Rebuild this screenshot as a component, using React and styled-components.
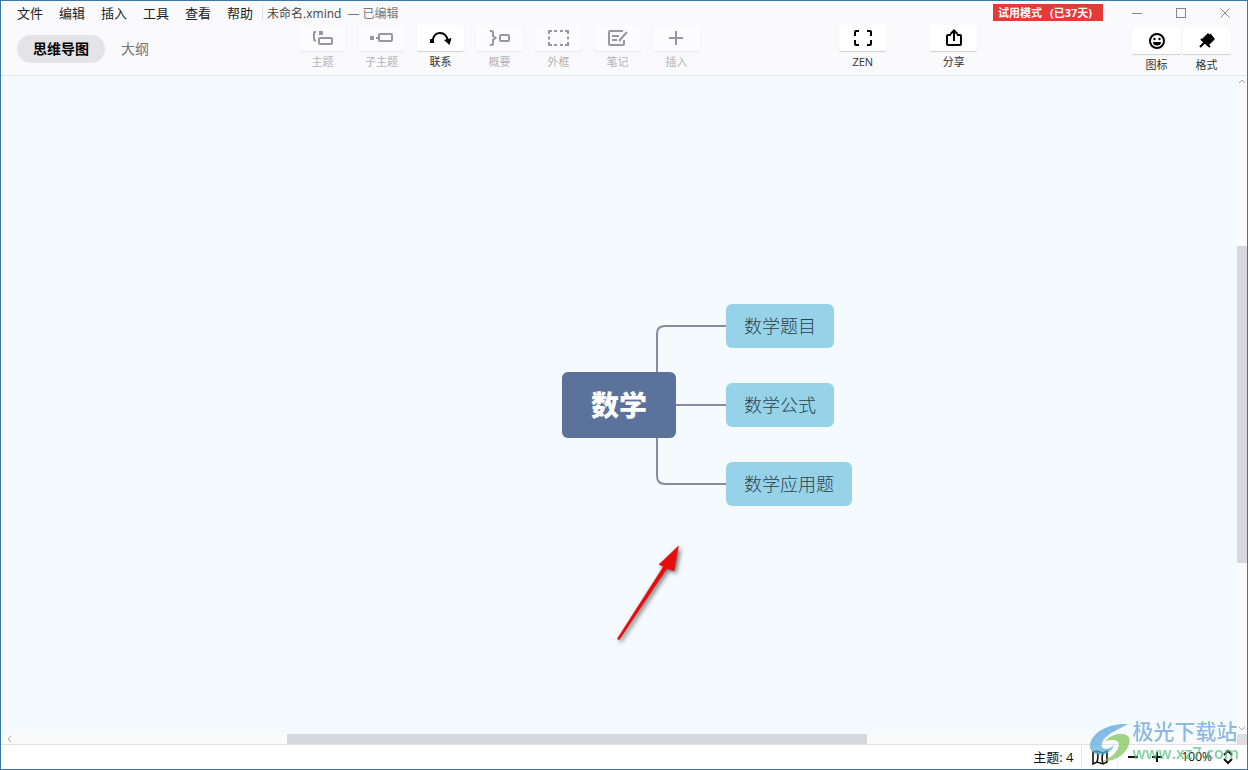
import styled, { createGlobalStyle, css } from 'styled-components';

const GlobalStyle = createGlobalStyle`
  * {
    box-sizing: border-box;
  }

  body {
    margin: 0;
    font-family: "Open Sans", "Noto Sans CJK SC", sans-serif;
    font-size: 13px;
    color: #222;
  }

  button {
    padding: 0;
    border: none;
    background: none;
    font: inherit;
    color: inherit;
  }

  svg {
    display: block;
  }
`;

const Window = styled.div`
  position: relative;
  display: flex;
  flex-direction: column;
  min-height: 100vh;
  border: 1px solid #3a78ab;
  background: #fafafc;
  overflow: hidden;
`;

const TitleBar = styled.header`
  display: flex;
  align-items: center;
  height: 23px;
  padding-left: 16px;
`;

const Menu = styled.nav`
  display: flex;
  gap: 16px;
  padding-right: 9px;
  border-right: 1px solid #e2e2e6;
  line-height: 16px;
`;

const FileName = styled.span`
  margin-left: 4px;
  font-size: 12px;
  color: #444;
`;

const FileState = styled.span`
  margin-left: 6px;
  font-size: 12px;
  color: #777;
`;

const TrialBadge = styled.button`
  display: flex;
  gap: 8px;
  height: 17px;
  margin-left: auto;
  padding: 0 11px 0 5px;
  background: #e53a37;
  color: #fff;
  font-size: 11px;
  font-weight: 700;
  line-height: 17px;
`;

const WindowButtons = styled.div`
  display: flex;
  margin-left: 12px;
`;

const WindowButton = styled.button`
  display: flex;
  justify-content: center;
  align-items: center;
  width: 44px;
  height: 22px;
  color: #84868e;
`;

const Toolbar = styled.div`
  display: flex;
  height: 52px;
  padding: 1px 16px 0 0;
  border-bottom: 1px solid #dfe7ef;
`;

const Tabs = styled.div`
  display: flex;
  align-items: flex-start;
  flex: 0 0 298px;
  padding: 10px 0 0 16px;
`;

const Tab = styled.button`
  height: 28px;
  padding: 0 16px 2px;
  border-radius: 14px;
  font-size: 14px;
  color: #777;
  ${({ $active }) =>
    $active &&
    css`
      background: #e4e4e6;
      color: #000;
      font-weight: 700;
    `}
`;

const Tools = styled.div`
  display: flex;
  gap: ${({ $gap }) => $gap}px;
`;

const Spacer = styled.div`
  flex: ${({ $grow }) => $grow};
`;

const ToolButton = styled.button`
  display: flex;
  flex-direction: column;
  align-items: center;
  gap: 3px;
  width: 47px;
  height: 46px;
  font-size: 11px;
  line-height: 16px;
  color: ${({ disabled }) => (disabled ? '#b4b4b8' : '#333')};
`;

const ToolIcon = styled.span`
  display: flex;
  justify-content: center;
  align-items: center;
  width: 100%;
  height: 26px;
  border-radius: 2px;
  background: ${({ $dim }) => ($dim ? '#fcfcfe' : '#fff')};
  color: ${({ $dim }) => ($dim ? '#98989c' : '#000')};
  box-shadow: 0 1px 1px ${({ $dim }) => ($dim ? '#e9e9ec' : '#cfcfd3')};
`;

const PanelTools = styled(Tools)`
  padding-top: 3px;

  ${ToolButton} {
    width: 49px;
  }
`;

const Workspace = styled.main`
  display: grid;
  flex: 1;
  grid-template-columns: 1fr 10px;
  grid-template-rows: 1fr 11px;
  min-height: 560px;
`;

const Canvas = styled.section`
  position: relative;
  background: #f4fafe;
  overflow: hidden;
`;

const MindMap = styled.div`
  position: absolute;
  top: 50%;
  left: 50%;
`;

const Topic = styled.div`
  position: absolute;
  top: ${({ $y }) => $y}px;
  left: 107px;
  height: 44px;
  padding: 0 18px;
  border-radius: 6px;
  background: #97d3e8;
  color: #2c3e4c;
  font-size: 18px;
  font-weight: 300;
  line-height: 44px;
  white-space: nowrap;
`;

const CentralTopic = styled.h1`
  position: absolute;
  top: -33px;
  left: -57px;
  width: 114px;
  height: 66px;
  margin: 0;
  border-radius: 6px;
  background: #5b739b;
  color: #fff;
  font-size: 28px;
  font-weight: 900;
  line-height: 66px;
  text-align: center;
`;

const Branches = styled.svg`
  position: absolute;
  top: -90px;
  left: 0;
`;

const PointerArrow = styled.svg`
  position: absolute;
  top: 135px;
  left: -10px;
`;

const VerticalScroll = styled.div`
  display: flex;
  flex-direction: column;
  align-items: center;
  background: #f9fafc;
`;

const HorizontalScroll = styled.div`
  display: flex;
  align-items: center;
  border-bottom: 1px solid #e2e2e4;
  background: #fafafb;
`;

const ScrollArrow = styled.button`
  display: flex;
  justify-content: center;
  align-items: center;
  flex: none;
  width: ${({ $wide }) => ($wide ? 16 : 10)}px;
  height: 10px;
  color: #a5a8b2;
`;

const ScrollTrack = styled.div`
  display: flex;
  flex: 1;
  align-self: stretch;
  flex-direction: ${({ $vertical }) => ($vertical ? 'column' : 'row')};
`;

const Thumb = styled.div`
  flex: ${({ $size }) => $size};
  background: #d7d8dd;
`;

const ScrollCorner = styled.div`
  background: #dddee2;
`;

const StatusBar = styled.footer`
  display: flex;
  justify-content: flex-end;
  align-items: stretch;
  height: 24px;
  padding-right: 13px;
  background: #fff;
  color: #111;
  font-size: 12px;
  line-height: 24px;
`;

const TopicCount = styled.span`
  padding-right: 8px;
  border-right: 1px solid #e8e8ea;
  font-size: 13px;
`;

const MapButton = styled.button`
  display: flex;
  justify-content: center;
  align-items: center;
  width: 36px;
  border-right: 1px solid #f0f0f2;
`;

const ZoomControls = styled.div`
  display: flex;
  align-items: center;
  padding-left: 3px;
`;

const ZoomStep = styled.button`
  display: flex;
  justify-content: center;
  width: 24px;
`;

const ZoomValue = styled.button`
  display: flex;
  align-items: center;
  gap: 10px;
  margin-left: 12px;
`;

const Watermark = styled.div`
  position: absolute;
  right: 8px;
  bottom: 7px;
  display: flex;
  align-items: flex-end;
  gap: 2px;
  opacity: 0.72;
  pointer-events: none;
`;

const WatermarkName = styled.div`
  color: #659fda;
  font-size: 21px;
  font-weight: 500;
  line-height: 26px;
`;

const WatermarkSite = styled.div`
  color: #52bd7c;
  font-family: "Open Sans", sans-serif;
  font-size: 16px;
  font-weight: 600;
  line-height: 18px;
`;

const Icon = ({ children, width = 24, height = 20 }) => (
  <svg
    width={width}
    height={height}
    viewBox={`0 0 ${width} ${height}`}
    fill="none"
    stroke="currentColor"
    strokeWidth="2"
    aria-hidden="true"
  >
    {children}
  </svg>
);

const icons = {
  topic: (
    <Icon>
      <path d="M5 4H4a1 1 0 0 0-1 1v6.5a1 1 0 0 0 1 1h1" />
      <rect x="8" y="3" width="4" height="4" fill="currentColor" stroke="none" />
      <rect x="8" y="10" width="13" height="6" rx="1" />
    </Icon>
  ),
  subtopic: (
    <Icon>
      <rect x="0" y="8" width="4" height="4" fill="currentColor" stroke="none" />
      <path d="M6 10h3" />
      <rect x="9" y="6" width="13" height="7" rx="1" />
    </Icon>
  ),
  relation: (
    <Icon>
      <rect x="1" y="11" width="4" height="4" fill="currentColor" stroke="none" />
      <path d="M4 11C5 7 8 5 11 5c4 0 7 3 8 8" />
      <path d="M15 12l7.500-2-2 7z" fill="currentColor" stroke="none" />
    </Icon>
  ),
  summary: (
    <Icon>
      <path d="M2 3h1.500A1.500 1.500 0 0 1 5 4.500V8l2.500 2L5 12v3.500A1.500 1.500 0 0 1 3.500 17H2" />
      <rect x="12" y="7" width="9" height="6" rx="1" />
    </Icon>
  ),
  boundary: (
    <Icon>
      <path d="M2 6V3h3M18 3h3v3M21 14v3h-3M5 17H2v-3M7 3h3M13 3h3M7 17h3M13 17h3M2 8.500v3M21 8.500v3" />
    </Icon>
  ),
  note: (
    <Icon>
      <path d="M17 3H4a1 1 0 0 0-1 1v12a1 1 0 0 0 1 1h13a1 1 0 0 0 1-1v-4M6 8h7M6 12h5M21 4l-8 9" />
    </Icon>
  ),
  plus: (
    <Icon>
      <path d="M11 3v14M4 10h14" />
    </Icon>
  ),
  zen: (
    <Icon>
      <path d="M4 8V4a1 1 0 0 1 1-1h3M16 3h3a1 1 0 0 1 1 1v4M20 12v4a1 1 0 0 1-1 1h-3M8 17H5a1 1 0 0 1-1-1v-4" />
    </Icon>
  ),
  share: (
    <Icon>
      <path d="M9 7H6a1 1 0 0 0-1 1v8a1 1 0 0 0 1 1h12a1 1 0 0 0 1-1V8a1 1 0 0 0-1-1h-3M12 13V3M8.500 6L12 2.500 15.500 6" />
    </Icon>
  ),
  emoji: (
    <Icon>
      <circle cx="12" cy="10" r="7" />
      <path d="M8 11h8a4 3.500 0 0 1-8 0z" fill="currentColor" stroke="none" />
      <circle cx="9.500" cy="8" r="1.200" fill="currentColor" stroke="none" />
      <circle cx="14.500" cy="8" r="1.200" fill="currentColor" stroke="none" />
    </Icon>
  ),
  format: (
    <Icon>
      <path
        d="M11 4l2-2 1.500 1.500 1-1L20 8l-6 6-7-6z"
        fill="currentColor"
        stroke="none"
      />
      <path d="M6 8l9 8M9.500 11.500L5 16" strokeWidth="2" />
    </Icon>
  ),
  map: (
    <Icon width={18} height={16}>
      <path
        d="M2 3l4-1 6 2 4-2v11l-4 2-6-2-4 2zM6 2c1 3 1 8 0 11M12 4c-1 3-1 8 0 11"
        strokeWidth="1.600"
      />
    </Icon>
  ),
};

const menuItems = ['文件', '编辑', '插入', '工具', '查看', '帮助'];

const editTools = [
  { icon: 'topic', label: '主题', disabled: true },
  { icon: 'subtopic', label: '子主题', disabled: true },
  { icon: 'relation', label: '联系' },
  { icon: 'summary', label: '概要', disabled: true },
  { icon: 'boundary', label: '外框', disabled: true },
  { icon: 'note', label: '笔记', disabled: true },
  { icon: 'plus', label: '插入', disabled: true },
];

const topics = [
  { text: '数学题目', y: -101 },
  { text: '数学公式', y: -22 },
  { text: '数学应用题', y: 57 },
];

const Tool = ({ icon, label, disabled }) => (
  <ToolButton type="button" disabled={disabled}>
    <ToolIcon $dim={disabled}>{icons[icon]}</ToolIcon>
    {label}
  </ToolButton>
);

const Arrow = ({ d }) => (
  <svg width="8" height="8" viewBox="0 0 8 8" fill="none" stroke="currentColor" aria-hidden="true">
    <path d={d} />
  </svg>
);

const App = () => {
  return (
    <>
      <GlobalStyle />
      <Window>
        <TitleBar>
          <Menu>
            {menuItems.map(item => (
              <button type="button" key={item}>
                {item}
              </button>
            ))}
          </Menu>
          <FileName>未命名.xmind</FileName>
          <FileState>— 已编辑</FileState>
          <TrialBadge type="button">
            <span>试用模式</span>
            <span>(已37天)</span>
          </TrialBadge>
          <WindowButtons>
            <WindowButton type="button" aria-label="最小化">
              <svg width="10" height="10" stroke="currentColor">
                <path d="M0 5.500h10" />
              </svg>
            </WindowButton>
            <WindowButton type="button" aria-label="最大化">
              <svg width="10" height="10" fill="none" stroke="currentColor">
                <rect x="0.500" y="0.500" width="9" height="9" />
              </svg>
            </WindowButton>
            <WindowButton type="button" aria-label="关闭">
              <svg width="10" height="10" stroke="currentColor">
                <path d="M0.500 0.500l9 9M9.500 0.500l-9 9" />
              </svg>
            </WindowButton>
          </WindowButtons>
        </TitleBar>

        <Toolbar>
          <Tabs>
            <Tab type="button" $active>
              思维导图
            </Tab>
            <Tab type="button">大纲</Tab>
          </Tabs>
          <Tools $gap={12}>
            {editTools.map(tool => (
              <Tool key={tool.label} {...tool} />
            ))}
          </Tools>
          <Spacer $grow={9} />
          <Tools $gap={44}>
            <Tool icon="zen" label="ZEN" />
            <Tool icon="share" label="分享" />
          </Tools>
          <Spacer $grow={10} />
          <PanelTools $gap={1}>
            <Tool icon="emoji" label="图标" />
            <Tool icon="format" label="格式" />
          </PanelTools>
        </Toolbar>

        <Workspace>
          <Canvas>
            <MindMap>
              <Branches width="108" height="180" fill="none" stroke="#868ba3" strokeWidth="2">
                <path d="M38 90V19q0-8 8-8h62M38 90h70M38 90v71q0 8 8 8h62" />
              </Branches>
              <CentralTopic>数学</CentralTopic>
              {topics.map(({ text, y }) => (
                <Topic key={text} $y={y}>
                  {text}
                </Topic>
              ))}
              <PointerArrow width="84" height="110" viewBox="0 0 84 110">
                <defs>
                  <filter id="arrowShadow" x="-20%" y="-20%" width="150%" height="150%">
                    <feDropShadow dx="2" dy="2" stdDeviation="2" floodColor="#333" floodOpacity="0.7" />
                  </filter>
                </defs>
                <path
                  d="M8.500 98.500L54.500 26.500 50 24.500 69.500 6 65 31 58 28.500 10.500 99.500Q9 100.500 8.500 98.500z"
                  fill="#e80c10"
                  stroke="#c01414"
                  strokeWidth="0.500"
                  filter="url(#arrowShadow)"
                />
              </PointerArrow>
            </MindMap>
          </Canvas>
          <VerticalScroll>
            <ScrollArrow type="button" aria-label="向上滚动">
              <Arrow d="M1 6l3-3 3 3" />
            </ScrollArrow>
            <ScrollTrack $vertical>
              <Spacer $grow={160} />
              <Thumb $size={317} />
              <Spacer $grow={161} />
            </ScrollTrack>
            <ScrollArrow type="button" aria-label="向下滚动">
              <Arrow d="M1 2l3 3 3-3" />
            </ScrollArrow>
          </VerticalScroll>
          <HorizontalScroll>
            <ScrollArrow type="button" $wide aria-label="向左滚动">
              <Arrow d="M6 1L3 4l3 3" />
            </ScrollArrow>
            <ScrollTrack>
              <Spacer $grow={270} />
              <Thumb $size={580} />
              <Spacer $grow={370} />
            </ScrollTrack>
          </HorizontalScroll>
          <ScrollCorner />
        </Workspace>

        <StatusBar>
          <TopicCount>主题: 4</TopicCount>
          <MapButton type="button" aria-label="导航图">
            {icons.map}
          </MapButton>
          <ZoomControls>
            <ZoomStep type="button" aria-label="缩小">
              <Icon width={10} height={10}>
                <path d="M0 5h10" />
              </Icon>
            </ZoomStep>
            <ZoomStep type="button" aria-label="放大">
              <Icon width={10} height={10}>
                <path d="M0 5h10M5 0v10" />
              </Icon>
            </ZoomStep>
            <ZoomValue type="button">
              100%
              <Icon width={12} height={16}>
                <path d="M2 6l4-4 4 4M2 10l4 4 4-4" />
              </Icon>
            </ZoomValue>
          </ZoomControls>
        </StatusBar>

        <Watermark aria-hidden="true">
          <svg width="42" height="38" viewBox="0 0 42 38">
            <defs>
              <linearGradient id="swirl" x1="0" y1="0" x2="0.600" y2="1">
                <stop offset="0" stopColor="#4d93d8" />
                <stop offset="0.500" stopColor="#5aa9e0" />
                <stop offset="1" stopColor="#5fb8c8" />
              </linearGradient>
            </defs>
            <path
              d="M39 0C22-1 4 7 1 20c-1 7 4 11 11 11 7-1 12-5 13-10-3 3-8 5-11 3-4-3 1-11 10-16 5-3 10-5 15-8z"
              fill="url(#swirl)"
            />
            <path
              d="M16 17c5-5 12-8 18-7 7 1 8 6 5 13-4 8-13 15-26 14 9-3 16-9 17-16 0-5-6-6-14-4z"
              fill="#7bc556"
            />
          </svg>
          <div>
            <WatermarkName>极光下载站</WatermarkName>
            <WatermarkSite>www.xz7.com</WatermarkSite>
          </div>
        </Watermark>
      </Window>
    </>
  );
};

export default App;
